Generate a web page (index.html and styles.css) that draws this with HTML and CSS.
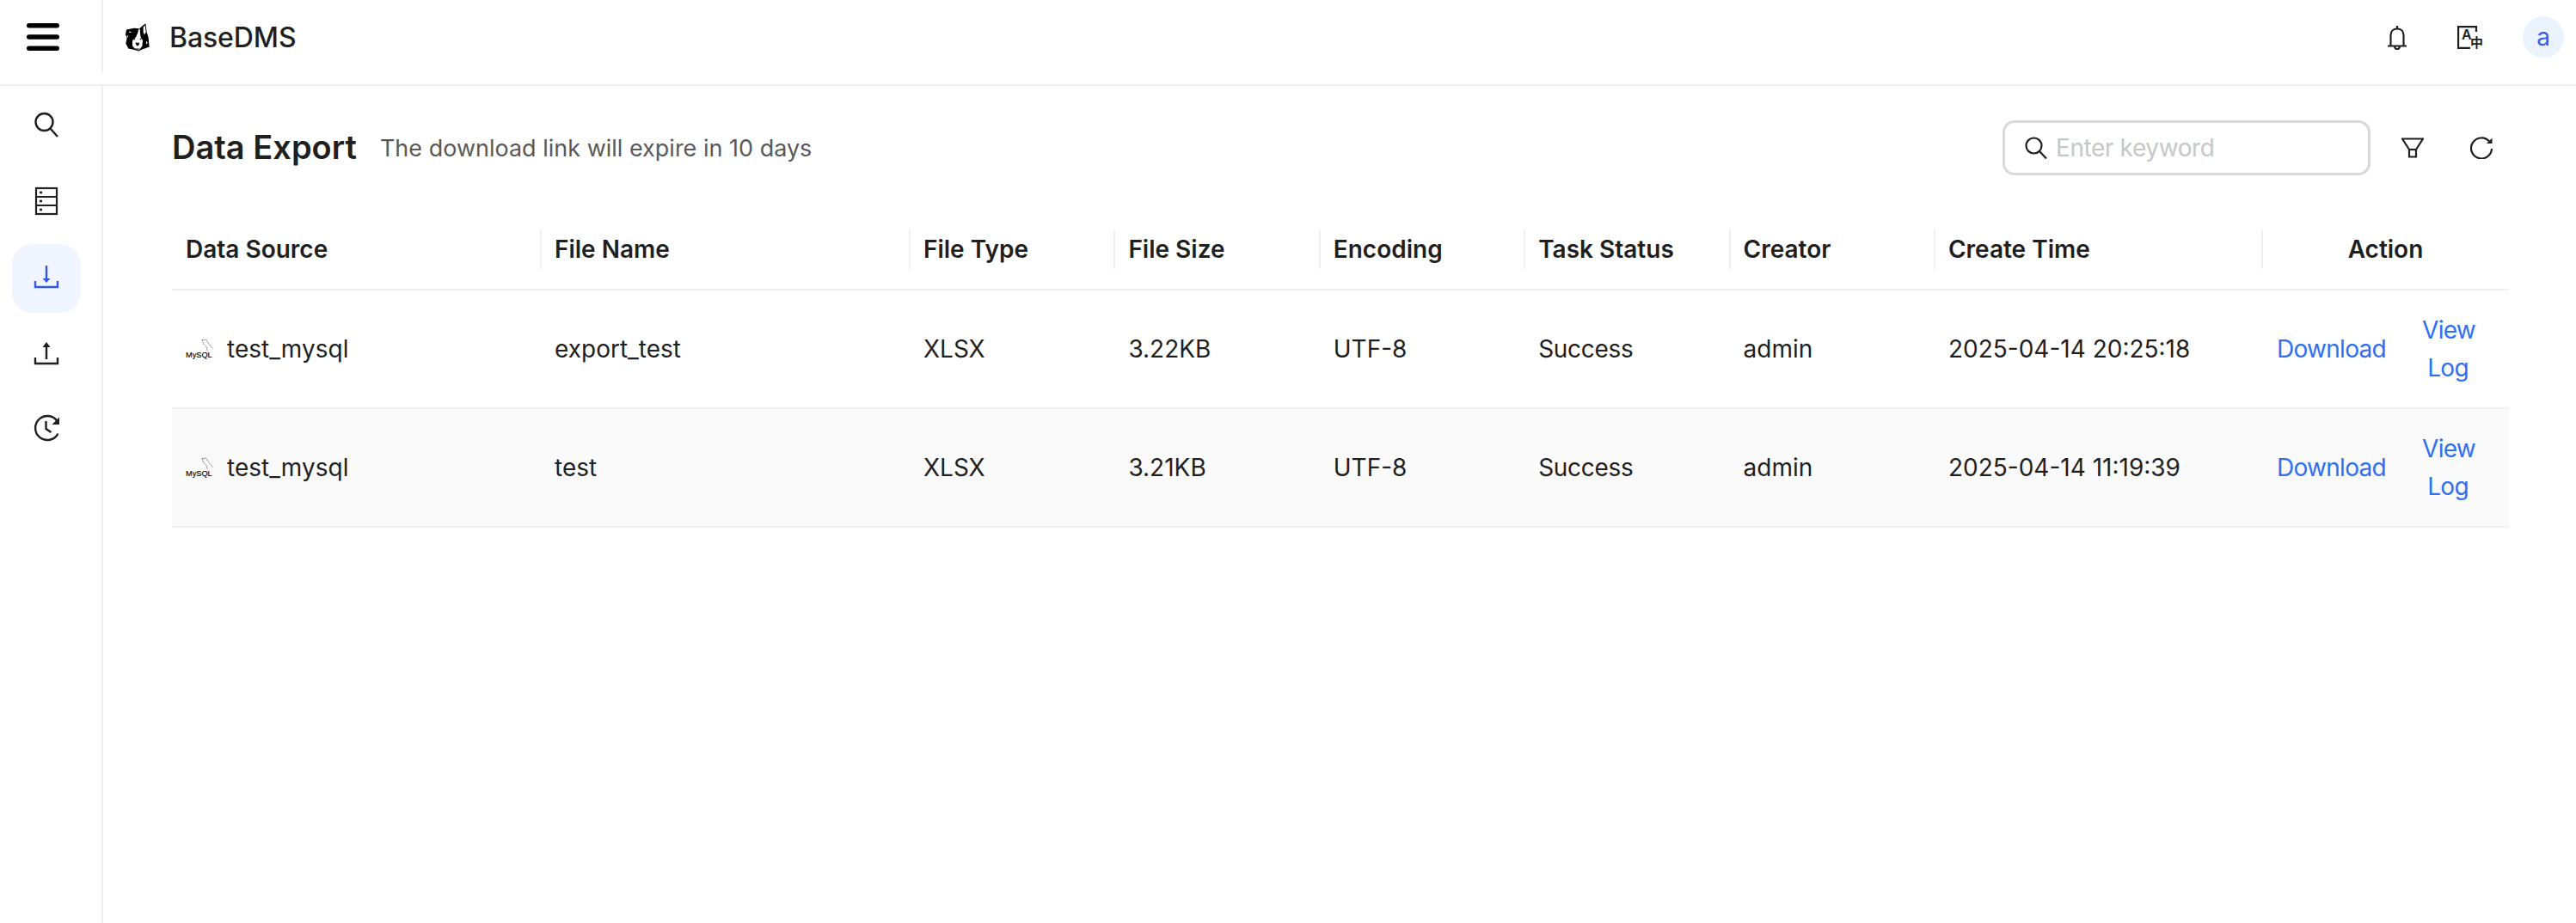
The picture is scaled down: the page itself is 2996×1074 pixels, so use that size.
FILE: index.html
```html
<!DOCTYPE html>
<html lang="en">
<head>
<meta charset="utf-8">
<title>BaseDMS</title>
<link rel="stylesheet" href="styles.css">
</head>
<body>
<header class="topbar">
  <div class="menu-cell">
    <svg class="ico-menu" viewBox="0 0 38 34"><path d="M2.700 3.700h32.600M2.700 17h32.600M2.700 30.300h32.600" fill="none" stroke="#000" stroke-width="5.400" stroke-linecap="round"/></svg>
  </div>
  <div class="brand">
    <svg class="ico-logo" viewBox="0 0 84 98">
      <path fill="#000" d="M3 22 30 17l18 1 12-10 10-8 4 30 6 20 3 32-23 8-15 7-17-5-18-4L1 70l4-20-5-10z"/>
      <path fill="#fff" d="M46 20h4l2 25 8 15-2 20-10 12-6 2-10-6-8-10V60l12-12 6-13z"/>
      <path fill="#fff" d="M62 14l6-8 3 24-5 10-4-10z"/>
      <path fill="#fff" d="M12 28l10 2-8 3zM5 44l6-2-4 8zM72 62l5 6-5 6z"/>
      <path fill="#000" d="M34 68h15l-3 8-4 3-4-3z"/>
      <path fill="#000" d="M24 50l10 4-3 4zM59 50l-10 4 3 4zM30 84l6 4h10l6-4-8 8h-6z"/>
    </svg>
    <span class="brand-name">BaseDMS</span>
  </div>
  <div class="top-actions">
    <svg class="ico-bell" viewBox="0 0 22 28" fill="none" stroke="#1f1f1f" stroke-width="2.200">
      <path d="M0 23.500h22M3.500 23.500V11C3.500 6.500 6.500 3.500 11 3.500S18.500 6.500 18.500 11v12.500"/>
      <path d="M11 0v3.500M8 23.500c0 5 6 5 6 0"/>
    </svg>
    <svg class="ico-lang" viewBox="0 0 30 27" fill="none" stroke="#1f1f1f" stroke-width="2.200">
      <path d="M22 7V1.100H1.100v24.800H15"/>
      <text class="lang-a" x="5" y="16">A</text>
      <text class="lang-zh" x="15" y="24.500">中</text>
    </svg>
    <div class="avatar">a</div>
  </div>
</header>
<div class="body-row">
  <nav class="sidebar">
    <a class="nav-item">
      <svg class="ico-nav" viewBox="0 3 32 32" fill="none" stroke="#1f1f1f" stroke-width="2.400"><circle cx="13.500" cy="13" r="10"/><path d="M20.500 20.500 29 30"/></svg>
    </a>
    <a class="nav-item">
      <svg class="ico-nav" viewBox="0 2 32 32" fill="none" stroke="#1f1f1f" stroke-width="2.200"><rect x="4" y="1" width="24" height="30"/><path d="M4 11h24M4 21h24"/><path d="M8 6h3M8 16h3M8 26h3" stroke-width="2.500"/></svg>
    </a>
    <a class="nav-item is-active">
      <svg class="ico-nav" viewBox="0 2 32 32" fill="none" stroke="#3358e8" stroke-width="2.400"><path d="M3 21v7h26v-7M16 3v18"/><path d="M11.500 18h9L16 23z" fill="#3358e8" stroke="none"/></svg>
    </a>
    <a class="nav-item">
      <svg class="ico-nav" viewBox="0 1 32 32" fill="none" stroke="#1f1f1f" stroke-width="2.400"><path d="M3 21v7h26v-7M16 7v16"/><path d="M11.500 9h9L16 3z" fill="#1f1f1f" stroke="none"/></svg>
    </a>
    <a class="nav-item">
      <svg class="ico-nav" viewBox="0 2 32 32" fill="none" stroke="#1f1f1f" stroke-width="2.400"><path d="M29.500 9.500A14 14 0 1 0 29.500 22.500"/><path d="M15.500 8v9l6 4"/><path d="M31 3.500V12h-8.500z" fill="#1f1f1f" stroke="none"/></svg>
    </a>
  </nav>
  <main class="main">
    <div class="toolbar">
      <div class="heading">
        <h1 class="title">Data Export</h1>
        <span class="subtitle">The download link will expire in 10 days</span>
      </div>
      <div class="tools">
        <label class="search">
          <svg class="ico-search" viewBox="0 0 26 26" fill="none" stroke="#1f1f1f" stroke-width="2.200"><circle cx="10.500" cy="10.500" r="9"/><path d="M17 17l8 8.500"/></svg>
          <input class="search-input" type="text" placeholder="Enter keyword">
        </label>
        <svg class="ico-filter" viewBox="0 0 26 24" fill="none" stroke="#1f1f1f" stroke-width="2.200"><path d="M1 1.500h24l-8 12.500v8.500H9V14z"/><path d="M9 14h8"/></svg>
        <svg class="ico-refresh" viewBox="0 0 26 26" fill="none" stroke="#1f1f1f" stroke-width="2.200"><path d="M22 5.500A12 12 0 1 0 25 14"/><path d="M25.500 1.500V8H19z" fill="#1f1f1f" stroke="none"/></svg>
      </div>
    </div>
    <table class="grid">
      <colgroup>
        <col class="c-wide"><col class="c-wide"><col class="c-std"><col class="c-std"><col class="c-std"><col class="c-std"><col class="c-std"><col class="c-time"><col class="c-act">
      </colgroup>
      <thead>
        <tr>
          <th><span class="th-in">Data Source</span></th>
          <th><span class="th-in">File Name</span></th>
          <th><span class="th-in">File Type</span></th>
          <th><span class="th-in">File Size</span></th>
          <th><span class="th-in">Encoding</span></th>
          <th><span class="th-in">Task Status</span></th>
          <th><span class="th-in">Creator</span></th>
          <th><span class="th-in">Create Time</span></th>
          <th class="th-act"><span class="th-in">Action</span></th>
        </tr>
      </thead>
      <tbody>
        <tr>
          <td><div class="source">
            <svg class="ico-mysql" viewBox="0 0 32 28"><path d="M19 3.500l4.500-.5 3 4.500 3 4 2 2M19 3.500l2 5 3 3 1.500 5" fill="none" stroke="#555" stroke-width=".8" stroke-dasharray="1.600 .7"/><text class="mysql-word" x="0" y="24">MySQL</text></svg>
            <span>test_mysql</span></div></td>
          <td>export_test</td><td>XLSX</td><td>3.22KB</td><td>UTF-8</td><td class="status">Success</td><td>admin</td><td>2025-04-14 20:25:18</td>
          <td><div class="actions"><a class="link">Download</a><a class="link link-wrap">View Log</a></div></td>
        </tr>
        <tr class="alt">
          <td><div class="source">
            <svg class="ico-mysql" viewBox="0 0 32 28"><path d="M19 3.500l4.500-.5 3 4.500 3 4 2 2M19 3.500l2 5 3 3 1.500 5" fill="none" stroke="#555" stroke-width=".8" stroke-dasharray="1.600 .7"/><text class="mysql-word" x="0" y="24">MySQL</text></svg>
            <span>test_mysql</span></div></td>
          <td>test</td><td>XLSX</td><td>3.21KB</td><td>UTF-8</td><td class="status">Success</td><td>admin</td><td>2025-04-14 11:19:39</td>
          <td><div class="actions"><a class="link">Download</a><a class="link link-wrap">View Log</a></div></td>
        </tr>
      </tbody>
    </table>
  </main>
</div>
</body>
</html>
```
FILE: styles.css
```css
* { box-sizing: border-box; }
html, body { margin: 0; height: 100%; overflow: hidden; background: #fff; }
body { font-family: Inter, "Noto Sans", sans-serif; font-size: 28px; color: #1f1f1f; display: flex; flex-direction: column; }

.topbar { height: 100px; flex: none; display: flex; border-bottom: 2px solid #f0f0f0; }
.menu-cell { width: 120px; height: 85px; flex: none; display: flex; align-items: center; padding-left: 31px; border-right: 2px solid #f0f0f0; }
.ico-menu { width: 38px; height: 34px; display: block; margin-top: 1px; }
.brand { display: flex; align-items: center; height: 85px; padding-left: 26px; gap: 23px; }
.ico-logo { width: 28px; height: 33px; display: block; margin-top: 1px; }
.brand-name { font-size: 32px; font-weight: 500; line-height: 1; margin-top: 2px; letter-spacing: -0.1px; }
.top-actions { margin-left: auto; height: 86px; display: flex; align-items: center; padding-right: 14px; }
.ico-bell { width: 22px; height: 28px; display: block; margin-top: 2px; }
.ico-lang { width: 30px; height: 27px; display: block; margin-left: 59px; }
.lang-a { font-family: Inter, sans-serif; font-size: 16px; font-weight: 600; fill: #1f1f1f; stroke: none; }
.lang-zh { font-family: "Noto Sans CJK SC", sans-serif; font-size: 15px; font-weight: 700; fill: #1f1f1f; stroke: none; }
.avatar { width: 48px; height: 48px; margin-left: 46px; border-radius: 50%; background: #ebf3ff; color: #3d5ce5; display: flex; align-items: center; justify-content: center; font-size: 28px; line-height: 1; }

.body-row { flex: 1; display: flex; min-height: 0; }
.sidebar { width: 120px; flex: none; border-right: 2px solid #f0f0f0; padding: 8px 14px 0; display: flex; flex-direction: column; gap: 8px; }
.nav-item { width: 80px; height: 80px; border-radius: 24px; display: flex; align-items: center; justify-content: center; }
.nav-item.is-active { background: #f0f5ff; }
.ico-nav { width: 32px; height: 32px; display: block; overflow: visible; }

.main { flex: 1; min-width: 0; padding: 40px 78px 0 80px; }
.toolbar { height: 64px; display: flex; align-items: center; justify-content: space-between; }
.heading { display: flex; align-items: center; gap: 27px; }
.title { margin: 0; font-size: 38px; font-weight: 600; line-height: 1.2; }
.subtitle { color: #595959; font-size: 27px; }
.tools { display: flex; align-items: center; padding-right: 19px; }
.search { width: 428px; height: 64px; border: 3px solid #d9d9d9; border-radius: 14px; display: flex; align-items: center; padding-left: 23px; gap: 10px; }
.ico-search { width: 26px; height: 26px; flex: none; display: block; }
.search-input { flex: 1; min-width: 0; border: 0; outline: 0; padding: 0; background: transparent; font: inherit; letter-spacing: -0.4px; color: #1f1f1f; }
.search-input::placeholder { color: #c7c7c7; opacity: 1; }
.ico-filter { width: 26px; height: 24px; margin-left: 36px; display: block; }
.ico-refresh { width: 26px; height: 26px; margin-left: 54px; display: block; }

.grid { width: 2718px; margin-top: 40px; border-collapse: separate; border-spacing: 0; table-layout: fixed; }
.c-wide { width: 429px; }
.c-std { width: 238.4px; }
.c-time { width: 381px; }
.c-act { width: 287px; }
th { height: 94px; padding: 0; font-weight: 600; text-align: left; border-bottom: 2px solid #f0f0f0; vertical-align: middle; }
.th-in { display: block; height: 46px; line-height: 46px; padding-left: 16px; border-right: 2px solid #f0f0f0; margin-right: -1px; }
.th-act { text-align: center; }
.th-act .th-in { border-right: 0; padding-left: 0; margin-right: 0; }
td { height: 138px; padding: 0 16px; border-bottom: 2px solid #f0f0f0; line-height: 44px; vertical-align: middle; }
.alt td { background: #fafafa; }
.status { letter-spacing: -0.3px; }
.source { display: flex; align-items: center; gap: 16px; }
.ico-mysql { width: 32px; height: 28px; flex: none; display: block; }
.mysql-word { font-family: "Liberation Sans", sans-serif; font-size: 9.200px; fill: #000; stroke: #000; stroke-width: 0.150px; }
.actions { display: flex; align-items: center; gap: 42px; margin-left: 1px; }
.link { color: #2f6ff0; flex: none; letter-spacing: -0.7px; }
.link-wrap { width: 60px; text-align: center; }
```
